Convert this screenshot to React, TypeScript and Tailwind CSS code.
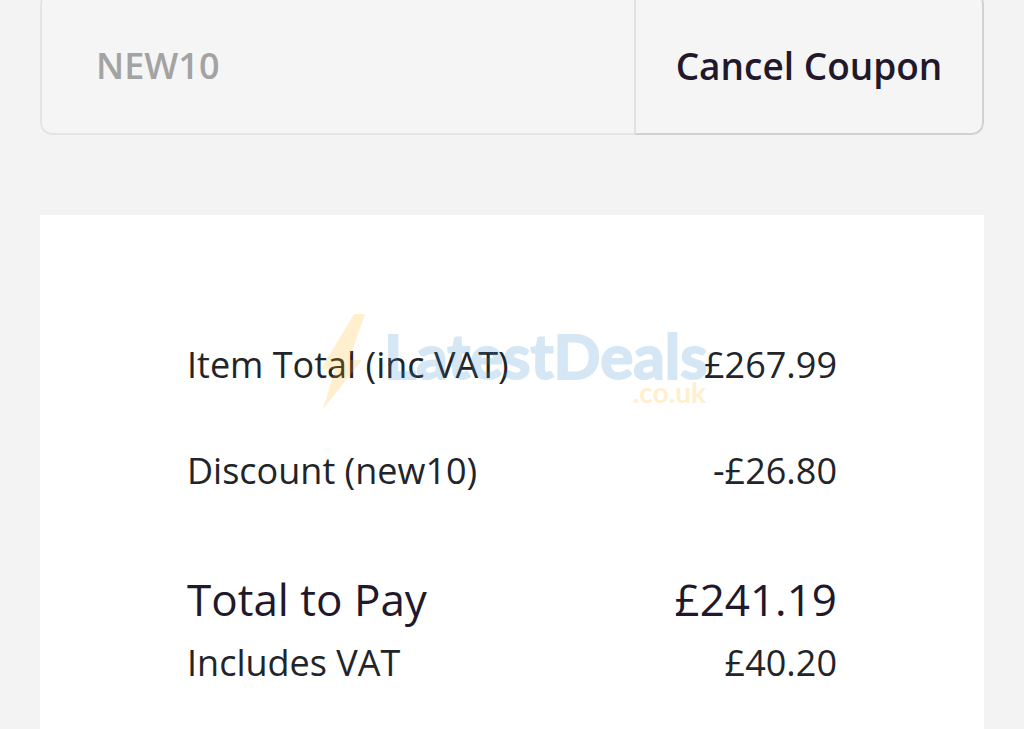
import { useState } from 'react';

const rows = [
  { label: 'Item Total (inc VAT)', value: '£267.99' },
  { label: 'Discount (new10)', value: '-£26.80' },
];

function CouponForm() {
  const [code, setCode] = useState('NEW10');

  return (
    <form
      onSubmit={(e) => e.preventDefault()}
      className="-mt-2 flex h-[143px] overflow-hidden rounded-xl"
    >
      <input
        type="text"
        aria-label="Coupon code"
        value={code}
        onChange={(e) => setCode(e.target.value)}
        className="min-w-0 flex-1 rounded-l-xl border-2 border-r-0 border-[#e4e4e5] bg-[#f5f5f5] pl-[54px] pt-1 text-[36px] font-semibold text-[#a3a3a3] outline-none"
      />
      <button
        type="button"
        onClick={() => setCode('')}
        className="w-[350px] shrink-0 rounded-r-xl border-2 border-[#d0d1d6] border-l-[#e1e1e3] bg-[#f5f5f5] pt-1 text-[37px] font-semibold text-[#21182b]"
      >
        Cancel Coupon
      </button>
    </form>
  );
}

function Watermark() {
  return (
    <svg
      viewBox="0 0 400 100"
      aria-hidden="true"
      className="pointer-events-none absolute left-[270px] top-[96px] h-[100px] w-[400px] font-['Lato',sans-serif] opacity-20"
    >
      <path d="M44 3 H55 L39 49 H52 L13 98 L25 58 H11 Z" fill="#ffb40f" />
      <text x="74" y="68" fontSize="62" fontWeight="700" fill="#328ccd" stroke="#328ccd" strokeWidth="2">LatestDeals</text>
      <text x="396" y="92" textAnchor="end" fontSize="28" fontWeight="700" fill="#ffb40f">.co.uk</text>
    </svg>
  );
}

export default function App() {
  return (
    <main className="min-h-screen bg-[#f3f3f3] px-10 font-['Open_Sans',sans-serif] text-[#212529]">
      <CouponForm />
      <section className="relative mt-20 min-h-[514px] bg-white px-[147px] pt-[122px]">
        <dl>
          {rows.map((row) => (
            <div key={row.label} className="mb-[50px] flex justify-between text-[36px] leading-14">
              <dt>{row.label}</dt>
              <dd>{row.value}</dd>
            </div>
          ))}
          <div className="mt-16 flex justify-between text-[44px] leading-[72px] text-[#21182b]">
            <dt>Total to Pay</dt>
            <dd>£241.19</dd>
          </div>
          <div className="flex justify-between text-[36px] leading-14">
            <dt>Includes VAT</dt>
            <dd>£40.20</dd>
          </div>
        </dl>
        <Watermark />
      </section>
    </main>
  );
}
